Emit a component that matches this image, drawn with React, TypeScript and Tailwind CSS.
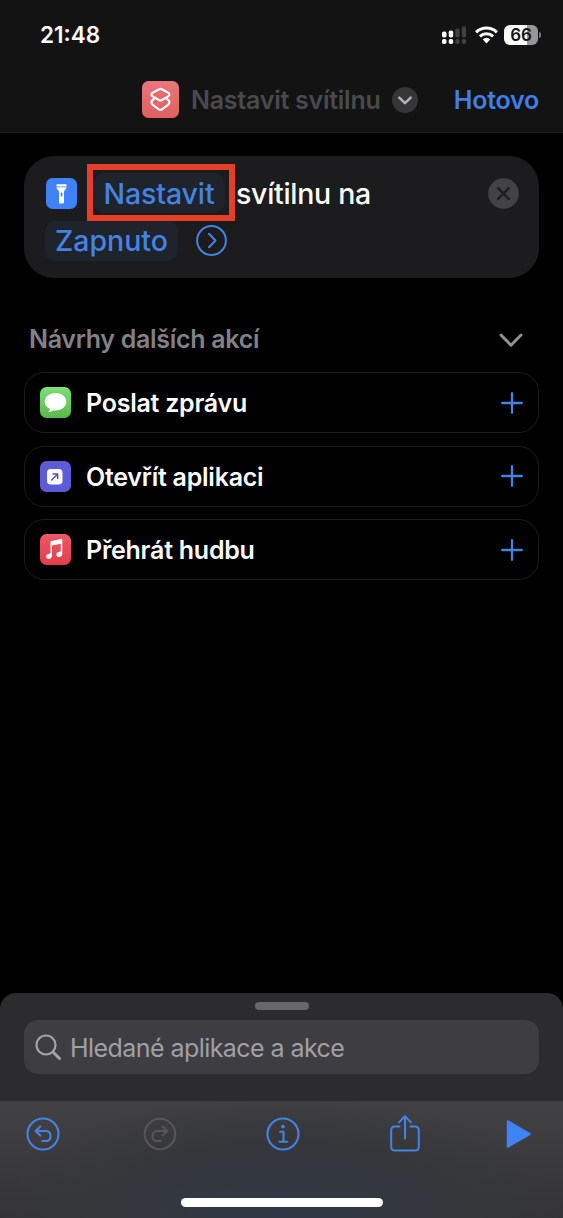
import type { ReactNode } from "react";

const stroke = { fill: "none", strokeLinecap: "round", strokeLinejoin: "round" } as const;

function ShortcutIcon() {
  return (
    <svg className="h-[37px] w-[37px] shrink-0" viewBox="0 0 37 37">
      <defs>
        <linearGradient id="shortcut" x1="0" y1="0" x2="0" y2="1">
          <stop offset="0" stopColor="#e8767c" />
          <stop offset="1" stopColor="#e0605f" />
        </linearGradient>
      </defs>
      <rect width="37" height="37" rx="6.5" fill="url(#shortcut)" />
      <g {...stroke} stroke="#fff" strokeWidth="2.1">
        <path d="M16.9 8.3 Q18.4 7.5 19.9 8.3 L26 11.7 Q28.8 13.6 26 15.5 L19.9 19 Q18.4 19.8 16.9 19 L10.8 15.5 Q8 13.6 10.8 11.7 Z" />
        <path d="M11.8 18.2 L10.8 18.9 Q8 21.3 10.8 23.9 L16.9 28.3 Q18.4 29.3 19.9 28.3 L26 23.900 Q28.8 21.3 26 18.900 L25 18.2" />
      </g>
    </svg>
  );
}

function StatusBar() {
  return (
    <div className="flex h-[69px] items-center justify-between pr-[22px] pl-10">
      <span className="pt-[2px] text-[22.5px] leading-none font-semibold text-white">21:48</span>
      <div className="flex items-center">
        <svg className="mr-[8px] h-[18px] w-[25px]" viewBox="0 0 25 18">
          <g fill="#fff">
            <rect x="0" y="5.5" width="4.5" height="6" rx="1.8" />
            <rect x="6.7" y="4.5" width="4.5" height="7" rx="1.8" />
            <rect x="0" y="13" width="4.5" height="5" rx="1.8" />
            <rect x="6.7" y="13" width="4.5" height="5" rx="1.8" />
          </g>
          <g fill="#404042">
            <rect x="13.3" y="2.5" width="4.3" height="9" rx="1.8" />
            <rect x="19.8" y="0.3" width="4.3" height="11.2" rx="1.8" />
            <rect x="13.3" y="13" width="4.3" height="5" rx="1.8" />
            <rect x="19.8" y="13" width="4.3" height="5" rx="1.8" />
          </g>
        </svg>
        <svg className="mr-[6px] h-[18px] w-[23px]" viewBox="0 0 23 18">
          <g fill="none" stroke="#fff" strokeWidth="3">
            <path d="M1.1 6.3a15 15 0 0 1 20.8 0" />
            <path d="M4.9 10.3a9.6 9.6 0 0 1 13.2 0" />
          </g>
          <path d="M7.7 13.3a5.8 5.8 0 0 1 7.6 0L11.5 17.4Z" fill="#fff" />
        </svg>
        <div className="flex h-[20px] w-[34px] items-center justify-center rounded-[6px] bg-linear-to-r from-white from-68% to-[#969696] to-68%">
          <span className="pt-px text-[17px] leading-none font-semibold text-[#151515]">66</span>
        </div>
        <div className="ml-[1px] h-[6px] w-[2px] rounded-r-full bg-[#777]" />
      </div>
    </div>
  );
}

function Header() {
  return (
    <header className="h-[133px] border-b border-[#1d1d1e] bg-[#131313]">
      <StatusBar />
      <div className="flex h-[61px] items-center pr-[24px] pl-[142px]">
        <ShortcutIcon />
        <span className="ml-[12px] w-[190px] pt-px text-[25px] leading-none font-semibold tracking-[-0.25px] whitespace-nowrap text-[#4a4a4c]">Nastavit svítilnu</span>
        <svg className="ml-[11px] h-[26px] w-[26px]" viewBox="0 0 26 26">
          <circle cx="13" cy="13" r="13" fill="#363639" />
          <path d="M7.3 10.7 13 16.2 18.7 10.7" {...stroke} stroke="#b4b4b8" strokeWidth="2.5" />
        </svg>
        <span className="ml-auto pt-px text-[25px] leading-none font-semibold tracking-[-0.25px] whitespace-nowrap text-[#407fe5]">Hotovo</span>
      </div>
    </header>
  );
}

function ActionCard() {
  return (
    <section className="ml-[24px] flex h-[122px] w-[515px] justify-between rounded-[30px] bg-[#1c1c1e] pt-[8px] pr-[20px] pl-[22px]">
      <div>
        <div className="flex h-[57px] items-center">
          <svg className="mt-[2px] h-[31px] w-[31px]" viewBox="0 0 31 31">
            <rect width="31" height="31" rx="6.5" fill="#3f82f7" />
            <path d="M10.500 6.200h10v2.200h-10zM10.500 9.200h10c0 2.500-2.500 2.700-2.500 4.900v10.100q0 1.300-1.300 1.300h-2.400Q13 25.500 13 24.200V14.100c0-2.200-2.500-2.400-2.500-4.900z" fill="#fff" />
            <rect x="14.700" y="14.500" width="1.700" height="4" rx=".85" fill="#3f82f7" />
          </svg>
          <div className="ml-[10px] flex h-[57px] w-[148px] items-center justify-center border-6 border-[#e54027]">
            <span className="mr-[4px] flex h-[40px] w-[131px] items-center justify-center rounded-[10px] bg-[#1e232c] pt-[4px] text-[28.5px] leading-none font-medium tracking-[-0.1px] text-[#4583e3]">Nastavit</span>
          </div>
          <span className="ml-[1px] pt-[4px] text-[28.5px] leading-none font-medium tracking-[-0.3px] whitespace-nowrap text-white">svítilnu na</span>
        </div>
        <div className="flex h-[40px] items-center">
          <span className="-ml-px flex h-[40px] w-[133px] items-center justify-center rounded-[10px] bg-[#1e232c] text-[28.5px] leading-none font-medium text-[#4583e3]">Zapnuto</span>
          <svg className="-mt-px ml-[18px] h-[31px] w-[31px]" viewBox="0 0 31 31">
            <g {...stroke} stroke="#4583e3" strokeWidth="2">
              <circle cx="15.5" cy="15.5" r="14.4" />
              <path d="M13 8.7 19.5 15.5 13 22.3" />
            </g>
          </svg>
        </div>
      </div>
      <svg className="mt-[14px] h-[31px] w-[31px]" viewBox="0 0 31 31">
        <circle cx="15.5" cy="15.5" r="15.3" fill="#434347" />
        <path d="M10.2 10.2 20.8 20.8M20.8 10.2 10.2 20.8" {...stroke} stroke="#1f1f21" strokeWidth="2.4" />
      </svg>
    </section>
  );
}

function SuggestionRow({ icon, label }: { icon: ReactNode; label: string }) {
  return (
    <button className="flex h-[61px] w-[515px] items-center rounded-[20px] border-[1.5px] border-[#1c1c1e] pr-[15px] pl-[15px]">
      {icon}
      <span className="ml-[15px] pt-[2px] text-[25px] leading-none font-semibold tracking-[-0.25px] whitespace-nowrap text-white">{label}</span>
      <svg className="ml-auto h-[22px] w-[22px]" viewBox="0 0 22 22">
        <path d="M11 1.2V20.8M1.2 11H20.8" {...stroke} stroke="#4583e3" strokeWidth="2.3" />
      </svg>
    </button>
  );
}

function MessageIcon() {
  return (
    <svg className="h-[31px] w-[31px]" viewBox="0 0 31 31">
      <defs>
        <linearGradient id="msg" x1="0" y1="0" x2="0" y2="1">
          <stop offset="0" stopColor="#7fdf78" />
          <stop offset="1" stopColor="#57b94a" />
        </linearGradient>
      </defs>
      <rect width="31" height="31" rx="6.5" fill="url(#msg)" />
      <path d="M15.5 6C21.6 6 26.3 9.7 26.3 14.700S21.6 23.400 15.5 23.400q-1 0-2-.2Q11.3 25 8.3 25q1.800-1.500 1.700-3.100C6.600 20.200 4.700 17.700 4.700 14.700 4.700 9.700 9.400 6 15.500 6z" fill="#fff" />
    </svg>
  );
}

function OpenAppIcon() {
  return (
    <svg className="h-[31px] w-[31px]" viewBox="0 0 31 31">
      <rect width="31" height="31" rx="6.5" fill="#5d5bd6" />
      <rect x="7" y="8" width="15.5" height="15.5" rx="3.8" fill="#fff" />
      <path d="M11.7 19 17.200 13.500M13 12.900H17.600V17.500" {...stroke} stroke="#5451b4" strokeWidth="1.5" />
    </svg>
  );
}

function MusicIcon() {
  return (
    <svg className="h-[31px] w-[31px]" viewBox="0 0 31 31">
      <defs>
        <linearGradient id="music" x1="0" y1="0" x2="0" y2="1">
          <stop offset="0" stopColor="#e9596a" />
          <stop offset="1" stopColor="#e43d4a" />
        </linearGradient>
      </defs>
      <rect width="31" height="31" rx="6.5" fill="url(#music)" />
      <path d="M11.600 6.900 20.900 4.900Q22.300 4.600 22.300 6V19.500C22.300 22 20.700 23 19 23c-3.500 0-3.500-4.300-.4-5 1.500-.3 2.200-.5 2.200-1.800V9.700L12 11.600V21.500C12 24 10.400 25 8.700 25c-3.500 0-3.400-4.300-.3-5 1.500-.3 2.100-.5 2.100-1.800V8.200Q10.500 7.100 11.600 6.900z" fill="#fff" />
    </svg>
  );
}

function Toolbar() {
  return (
    <div className="h-[117px] bg-[radial-gradient(ellipse_at_50%_100%,#303845_0%,#35373b_45%,transparent_75%),linear-gradient(#424244,#343436)]">
      <div className="flex h-[66px] items-center pl-[26px]">
        <svg className="h-[34px] w-[34px]" viewBox="0 0 34 34">
          <g {...stroke} stroke="#4583e3" strokeWidth="2.1">
            <circle cx="17" cy="17" r="15.500" />
            <path d="M14.3 9.4 9.6 14 14.3 18.500M9.900 14H20Q24.500 14 24.500 19T20 24H16.200" />
          </g>
        </svg>
        <svg className="ml-[83px] h-[34px] w-[34px]" viewBox="0 0 34 34">
          <g {...stroke} stroke="#565658" strokeWidth="2.1">
            <circle cx="17" cy="17" r="15.200" />
            <path d="M19.7 9.4 24.4 14 19.7 18.500M24.100 14H14Q9.500 14 9.500 19T14 24H17.800" />
          </g>
        </svg>
        <svg className="ml-[89px] h-[34px] w-[34px]" viewBox="0 0 34 34">
          <g {...stroke} stroke="#4583e3" strokeWidth="2.1">
            <circle cx="17" cy="17" r="15.500" />
            <path d="M14 14.700H17.500V24.500M13.500 24.800H21.300" />
          </g>
          <circle cx="17" cy="9.600" r="1.900" fill="#4583e3" />
        </svg>
        <svg className="-mt-[2px] ml-[90px] h-[38px] w-[30px]" viewBox="0 0 30 38">
          <path d="M9.5 12.500H5Q1.200 12.500 1.200 16.200V32.700Q1.200 36.500 5 36.500H25Q28.800 36.500 28.800 32.700V16.200Q28.800 12.500 25 12.500H20.500M15 24.500V2.500M9 8.400 15 2.300 21 8.400" {...stroke} stroke="#4583e3" strokeWidth="2" />
        </svg>
        <svg className="ml-[86px] h-[30px] w-[26px]" viewBox="0 0 26 30">
          <path d="M2 2.500 23.500 15 2 27.500Z" fill="#4083f7" stroke="#4083f7" strokeWidth="2.5" strokeLinejoin="round" />
        </svg>
      </div>
      <div className="mx-auto mt-[31px] h-[9px] w-[202px] rounded-full bg-white" />
    </div>
  );
}

export default function App() {
  return (
    <div className="flex h-[1218px] w-[563px] flex-col overflow-hidden bg-black font-['Inter','Liberation_Sans',sans-serif]">
      <Header />
      <main className="flex-1 pt-[23px]">
        <ActionCard />
        <div className="mt-[43px] flex h-[36px] items-center justify-between pr-[40px] pl-[29px]">
          <h2 className="text-[25px] leading-none font-semibold tracking-[-0.3px] whitespace-nowrap text-[#828286]">Návrhy dalších akcí</h2>
          <svg className="mt-px h-[16px] w-[24px]" viewBox="0 0 24 16">
            <path d="M2 3 12 13.2 22 3" {...stroke} stroke="#929296" strokeWidth="2.9" />
          </svg>
        </div>
        <div className="mt-[15px] ml-[24px] flex flex-col gap-[12.5px]">
          <SuggestionRow icon={<MessageIcon />} label="Poslat zprávu" />
          <SuggestionRow icon={<OpenAppIcon />} label="Otevřít aplikaci" />
          <SuggestionRow icon={<MusicIcon />} label="Přehrát hudbu" />
        </div>
      </main>
      <footer className="h-[225px] overflow-hidden rounded-t-[16px] bg-[#2c2c2e]">
        <div className="h-[108px] pt-[9px]">
          <div className="mx-auto h-[8px] w-[54px] rounded-full bg-[#68686c]" />
          <div className="mt-[10px] ml-[24px] flex h-[54px] w-[515px] items-center rounded-[14px] bg-[#3e3d42] pl-[11px]">
            <svg className="mt-px h-[27px] w-[27px]" viewBox="0 0 27 27">
              <g {...stroke} stroke="#a3a3a8">
                <circle cx="11" cy="11" r="9.5" strokeWidth="2.2" />
                <path d="M18.2 18.2 24.5 24.5" strokeWidth="3" />
              </g>
            </svg>
            <span className="ml-[8px] pt-[2px] text-[25px] leading-none tracking-[-0.56px] whitespace-nowrap text-[#a0a0a5]">Hledané aplikace a akce</span>
          </div>
        </div>
        <Toolbar />
      </footer>
    </div>
  );
}
